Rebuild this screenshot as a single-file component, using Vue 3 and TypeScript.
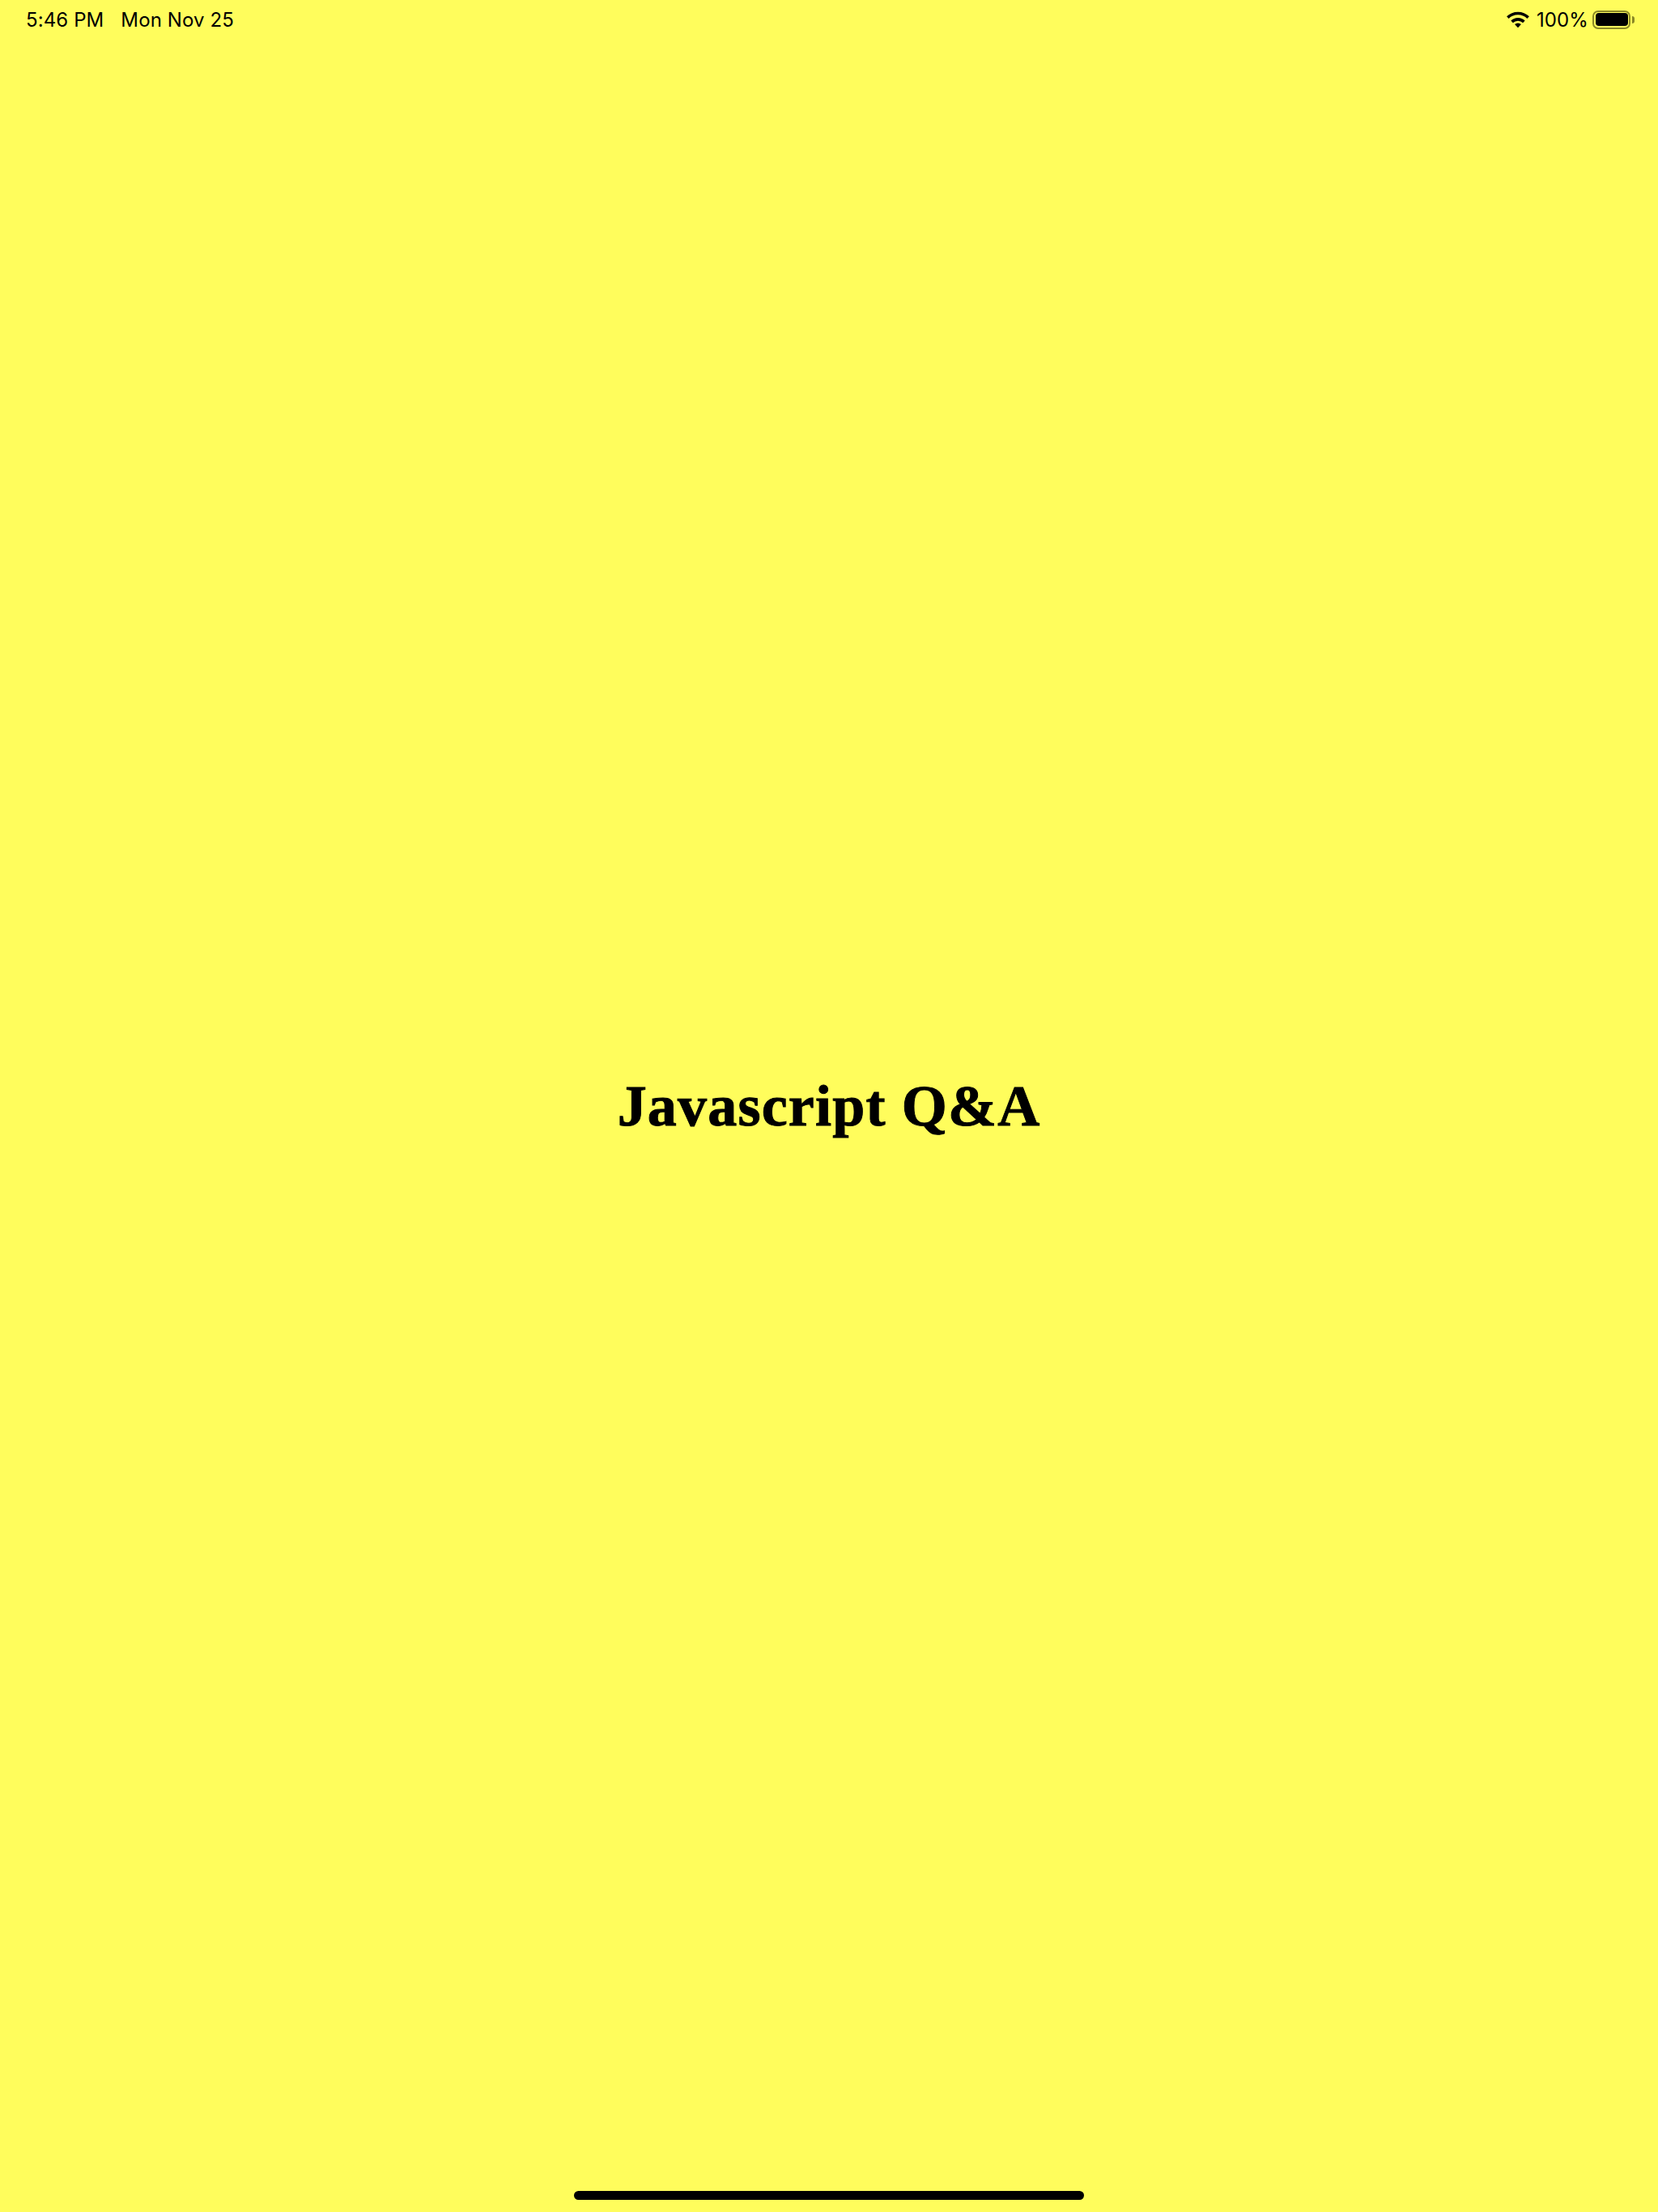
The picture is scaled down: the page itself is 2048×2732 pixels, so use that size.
<script setup lang="ts">
const title: string = 'Javascript Q&A'
</script>

<template>
  <div class="page">
    <header class="status">
      <div class="left">
        <span>5:46 PM</span>
        <span>Mon Nov 25</span>
      </div>
      <div class="right">
        <svg class="wifi" viewBox="0 0 28 20" aria-hidden="true">
          <path class="arc" d="M2.200 7.800A16.800 16.800 0 0 1 25.800 7.800" />
          <path class="arc" d="M7.100 12.700A9.800 9.800 0 0 1 20.900 12.700" />
          <path d="M10.300 15.600a5.300 5.300 0 0 1 7.400 0L14 19.600z" />
        </svg>
        <span>100%</span>
        <div class="battery">
          <div class="shell"><div class="level"></div></div>
          <div class="cap"></div>
        </div>
      </div>
    </header>
    <main class="center">
      <h1>{{ title }}</h1>
    </main>
    <footer class="bottom">
      <div class="home"></div>
    </footer>
  </div>
</template>

<style scoped>
.page {
  width: 2048px;
  height: 2732px;
  background: #fffd5c;
  color: #000;
  display: grid;
  grid-template-rows: 1fr auto 1fr;
  overflow: hidden;
}
.status {
  align-self: start;
  height: 48px;
  padding: 0 29px 0 32px;
  display: flex;
  align-items: center;
  justify-content: space-between;
  font-family: Inter, "Liberation Sans", sans-serif;
  font-size: 24px;
  letter-spacing: 0.1px;
}
.left {
  display: flex;
  gap: 21px;
}
.right {
  display: flex;
  align-items: center;
  gap: 5px;
}
.wifi {
  width: 30px;
  height: 22px;
  fill: #000;
  margin-right: 3px;
}
.arc {
  fill: none;
  stroke: #000;
  stroke-width: 3.400;
}
.battery {
  display: flex;
  align-items: center;
  gap: 2px;
}
.shell {
  width: 47px;
  height: 23px;
  box-sizing: border-box;
  border: 2px solid #8a8826;
  border-radius: 7px;
  padding: 1.500px;
}
.level {
  height: 100%;
  background: #000;
  border-radius: 4px;
}
.cap {
  width: 3px;
  height: 9px;
  background: #8a8826;
  border-radius: 0 3px 3px 0;
}
.center {
  display: flex;
  justify-content: center;
}
h1 {
  margin: 0;
  font-family: "Liberation Serif", serif;
  font-weight: 700;
  font-size: 72px;
  line-height: 1.2;
  letter-spacing: 1.200px;
  -webkit-text-stroke: 1px #000;
}
.bottom {
  align-self: end;
  display: flex;
  justify-content: center;
  padding-bottom: 15px;
}
.home {
  width: 630px;
  height: 11px;
  background: #000;
  border-radius: 5.500px;
}
</style>

<style>
body {
  margin: 0;
}
</style>
